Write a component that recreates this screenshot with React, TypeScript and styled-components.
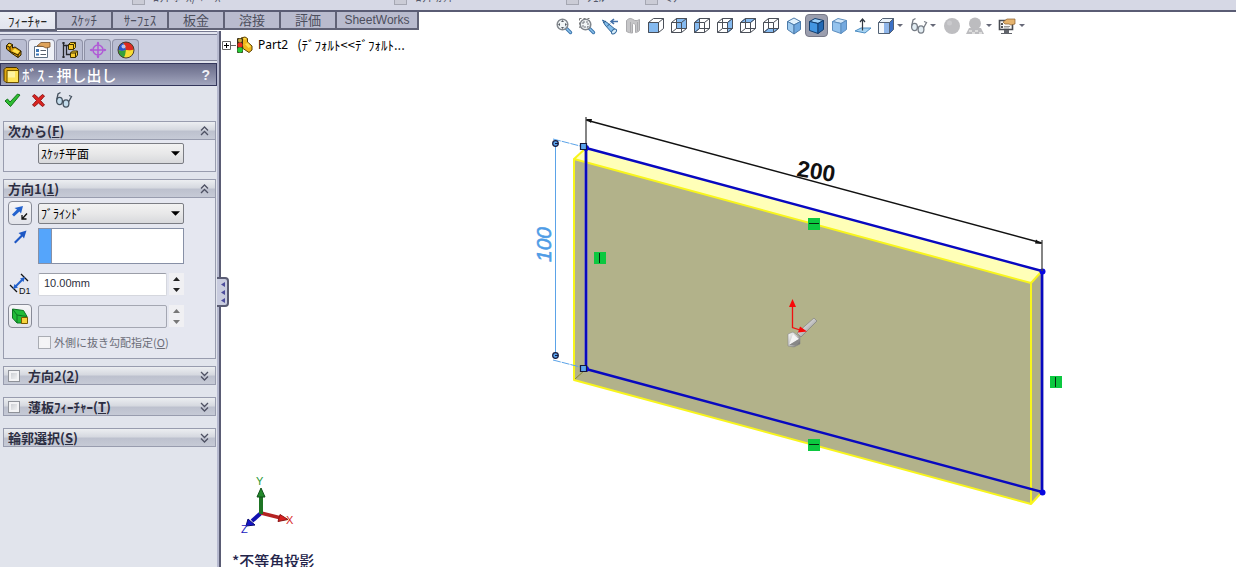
import React from "react";
import styled, { createGlobalStyle, css } from "styled-components";

const jp = `"Noto Sans CJK JP", sans-serif`;

const GlobalStyle = createGlobalStyle`
  * { box-sizing: border-box; }
  body { margin: 0; background: #fff; font-family: ${jp}; font-size: 12px; color: #1c1c28; overflow: hidden; }
  button, input, select { font: inherit; color: inherit; margin: 0; padding: 0; }
  svg { display: block; }
`;

const Page = styled.div`
  display: flex;
  flex-direction: column;
  min-height: 100vh;
`;

/* ---------- ribbon ---------- */

const Ribbon = styled.header`
  display: flex;
  align-items: flex-end;
  height: 12px;
  overflow: hidden;
  background: #d6d8e5;
  border-bottom: 2px solid #5a5c74;
`;

const RibbonItem = styled.button<{ $gap: number }>`
  display: flex;
  align-items: flex-end;
  gap: 8px;
  flex: none;
  height: 16px;
  margin-left: ${(p) => p.$gap}px;
  border: 0;
  background: none;
  color: #55586a;
  font-size: 12px;
  line-height: 16px;
  padding-bottom: 5px;
`;

const RibbonGlyph = styled.span`
  width: 13px;
  height: 8px;
  border: 1px solid #a5a7b2;
  background: #cbccd6;
`;

const TabRow = styled.div`
  display: flex;
  align-items: flex-start;
  height: 19px;
  position: relative;
  z-index: 2;
`;

const Tabs = styled.nav`
  display: flex;
  flex: none;
`;

const Tab = styled.button<{ $active?: boolean; $wide?: boolean }>`
  width: ${(p) => (p.$wide ? 82 : 56)}px;
  height: 18px;
  border: 0;
  border-right: 2px solid #606276;
  border-bottom: 2px solid #606276;
  background: #b9bbce;
  color: #4c4e5c;
  font-size: 13px;
  line-height: 16px;
  white-space: nowrap;
  ${(p) => p.$wide && css`font-family: "Liberation Sans", sans-serif; font-size: 12px;`}
  ${(p) =>
    p.$active &&
    css`
      width: 57px;
      height: 19px;
      background: linear-gradient(#eceef5, #e2e4ee);
      color: #222;
    `}
`;

const ViewBar = styled.div`
  display: flex;
  flex: none;
  margin: 2px 0 0 133px;
`;

const ViewButton = styled.button<{ $active?: boolean }>`
  display: flex;
  align-items: center;
  justify-content: center;
  width: 23px;
  height: 23px;
  border: 1px solid transparent;
  border-radius: 4px;
  background: none;
  ${(p) =>
    p.$active &&
    css`
      background: #9b9eae;
      border-color: #777988;
    `}
`;

const CaretButton = styled.button`
  display: flex;
  align-items: center;
  width: 10px;
  height: 23px;
  border: 0;
  background: none;
`;

/* ---------- property manager ---------- */

const Workspace = styled.div`
  display: flex;
  flex: 1;
`;

const Sidebar = styled.aside`
  position: relative;
  flex: none;
  width: 221px;
  background: #e1e4ec;
  border-right: 2px solid #5a5c74;
  box-shadow: inset -2px 0 #b6b9cf;
`;

const PanelTabs = styled.nav`
  display: flex;
  align-items: flex-end;
  gap: 1px;
  height: 30px;
  margin-right: 2px;
  background: #cdd0e1;
  border-top: 1px solid #777a92;
  border-bottom: 1px solid #85889c;
  box-shadow: inset 0 2px #e3e5ef, inset 0 3px #777a92;
`;

const PanelTab = styled.button<{ $active?: boolean }>`
  display: flex;
  align-items: center;
  justify-content: center;
  width: 27px;
  height: 21px;
  border: 1px solid #8e91a6;
  border-bottom: 0;
  border-radius: 4px 4px 0 0;
  background: ${(p) => (p.$active ? "#eff1f7" : "#b9bdd2")};
`;

const TitleBar = styled.div`
  display: flex;
  align-items: center;
  height: 23px;
  margin: 2px 2px 0 0;
  padding: 0 6px 0 2px;
  gap: 2px;
  border: 1px solid #34375c;
  background: linear-gradient(#686b88, #8487a2 50%, #a2a6be);
`;

const Title = styled.h1`
  flex: 1;
  margin: 0;
  color: #fff;
  font-size: 15px;
  font-weight: 500;
  line-height: 20px;
  white-space: pre;
`;

const HelpButton = styled.button`
  border: 0;
  background: none;
  color: #f0f0f6;
  font-family: "Liberation Sans", sans-serif;
  font-size: 14px;
  font-weight: 700;
  line-height: 18px;
`;

const Actions = styled.div`
  display: flex;
  gap: 8px;
  height: 35px;
  padding: 5px 0 0 3px;
`;

const PlainButton = styled.button`
  display: flex;
  align-items: center;
  justify-content: center;
  width: 18px;
  height: 18px;
  border: 0;
  background: none;
`;

const Groups = styled.div`
  display: flex;
  flex-direction: column;
  gap: 7px;
  margin: 0 3px;
`;

const Collapsed = styled.div`
  display: flex;
  flex-direction: column;
  gap: 12px;
`;

const Group = styled.section`
  border: 1px solid #989cae;
  background: #e5e7f0;
`;

const GroupHeader = styled.div<{ $open?: boolean }>`
  display: flex;
  align-items: center;
  height: 17px;
  padding: 0 5px 0 4px;
  background: linear-gradient(#eceef1, #d6d9e0 45%, #bdc1ce 55%, #c6cad6);
  ${(p) =>
    p.$open &&
    css`
      height: 18px;
      border-bottom: 1px solid #989cae;
    `}
`;

const GroupTitle = styled.span`
  flex: 1;
  color: #2c2e42;
  font-size: 13px;
  font-weight: 700;
  line-height: 16px;
  white-space: nowrap;
`;

const GroupLabel = styled(GroupTitle).attrs({ as: "label" })<{ htmlFor: string }>`
  padding-left: 8px;
`;

const FoldButton = styled.button`
  display: flex;
  width: 10px;
  border: 0;
  background: none;
`;

const Check = styled.input<{ $small?: boolean }>`
  appearance: none;
  flex: none;
  width: ${(p) => (p.$small ? 12 : 13)}px;
  height: ${(p) => (p.$small ? 12 : 13)}px;
  border: 1px solid #8f9299;
  background: linear-gradient(135deg, #c3c6cc, #fafafa);
  box-shadow: inset 0 0 0 2px #f3f3f5;
  &:disabled {
    border-color: #a9acb3;
    background: #f4f4f6;
  }
`;

const FromBody = styled.div`
  padding: 3px 0 7px 34px;
`;

const DirectionBody = styled.div`
  display: grid;
  grid-template-columns: 24px 146px;
  column-gap: 6px;
  row-gap: 3px;
  padding: 3px 4px 5px;
`;

const Cell = styled.div<{ $top?: boolean }>`
  display: flex;
  align-items: ${(p) => (p.$top ? "flex-start" : "center")};
  justify-content: center;
`;

const Field = styled.div<{ $tall?: boolean }>`
  display: flex;
  align-items: center;
  height: ${(p) => (p.$tall ? 34 : 24)}px;
  gap: 2px;
`;

const SelectWrap = styled.div`
  display: grid;
  width: 146px;
  height: 21px;
  align-items: center;
  > * { grid-area: 1 / 1; }
  > svg { justify-self: end; margin-right: 4px; pointer-events: none; }
`;

const Select = styled.select`
  appearance: none;
  width: 100%;
  height: 21px;
  padding: 0 2px;
  border: 1px solid #7b7d84;
  border-radius: 2px;
  background: linear-gradient(#f2f2f2, #e8e8e9 50%, #d8d9dc);
  color: #000;
  font-size: 12px;
`;

const SelectionBox = styled.div`
  display: flex;
  gap: 1px;
  width: 146px;
  height: 36px;
  border: 1px solid #8790a6;
  background: #fff;
`;

const SelectionMark = styled.div`
  width: 13px;
  background: #55a5fb;
  border-right: 1px solid #8790a6;
`;

const NumberInput = styled.input`
  width: 129px;
  height: 23px;
  padding: 0 5px 2px;
  border: 1px solid #d5d7de;
  border-top-color: #9b9ea8;
  border-radius: 2px;
  background: #fff;
  color: #2e3040;
  font-family: "Liberation Sans", sans-serif;
  font-size: 11px;
  &:disabled {
    border-color: #a4a7b2;
    background: #e4e6ee;
  }
`;

const Spinner = styled.div`
  display: flex;
  flex-direction: column;
  width: 15px;
  background: #f0f0f3;
`;

const SpinButton = styled.button`
  display: flex;
  align-items: center;
  justify-content: center;
  height: 11px;
  border: 0;
  background: none;
  color: #222;
  &:disabled { color: #777; }
`;

const ToolButton = styled.button`
  display: flex;
  align-items: center;
  justify-content: center;
  width: 24px;
  height: 24px;
  border: 1px solid #888b97;
  border-radius: 4px;
  background: linear-gradient(#f6f6f8, #e2e3ea);
`;

const CheckRow = styled.div`
  display: flex;
  align-items: center;
  gap: 3px;
  grid-column: 2;
  height: 22px;
  color: #6b6d78;
  font-size: 11px;
  line-height: 16px;
  white-space: nowrap;
`;

const Handle = styled.button`
  position: absolute;
  top: 246px;
  right: -10px;
  display: flex;
  align-items: center;
  justify-content: center;
  width: 12px;
  height: 30px;
  border: 2px solid #5a5c74;
  border-left: 0;
  border-radius: 0 4px 4px 0;
  background: #c9ccdf;
  z-index: 1;
`;

/* ---------- viewport ---------- */

const Viewport = styled.main`
  position: relative;
  flex: 1;
  min-width: 0;
  background: #fff;
`;

const Scene = styled.svg`
  position: absolute;
  inset: 0;
  width: 100%;
  height: 100%;
`;

const Tree = styled.div`
  position: relative;
  display: flex;
  align-items: center;
  width: max-content;
  padding: 5px 0 0 1px;
  color: #000;
  font-size: 12px;
  line-height: 18px;
  white-space: pre;
`;

const Expander = styled.button`
  display: flex;
  border: 0;
  background: none;
`;

const PartName = styled.span`
  margin-left: 5px;
  font-family: "Noto Sans", sans-serif;
  font-size: 12px;
`;

const Configuration = styled.span`
  margin-left: 9px;
  font-size: 13px;
`;

const ViewName = styled.p`
  position: absolute;
  left: 11px;
  bottom: -4px;
  margin: 0;
  color: #23234a;
  font-size: 15px;
  font-weight: 500;
  line-height: 20px;
`;

/* ---------- icons ---------- */

const Down = ({ color = "#000", w = 9 }: { color?: string; w?: number }) => (
  <svg width={w} height="5" viewBox="0 0 10 5"><path d="M0 0h10L5 5z" fill={color} /></svg>
);

const Spin = ({ up }: { up?: boolean }) => (
  <svg width="7" height="4" viewBox="0 0 7 4"><path d={up ? "M0 4h7L3.500 0z" : "M0 0h7L3.500 4z"} fill="currentColor" /></svg>
);

const Fold = ({ open }: { open?: boolean }) => (
  <svg width="9" height="10" viewBox="0 0 9 10" fill="none" stroke="#4e5163" strokeWidth="1.300">
    <path d={open ? "M1 4.500L4.500 1L8 4.500M1 9L4.500 5.500L8 9" : "M1 1L4.500 4.500L8 1M1 5.500L4.500 9L8 5.500"} />
  </svg>
);

const Glasses = ({ size = 18, muted }: { size?: number; muted?: boolean }) => (
  <svg width={size} height={size} viewBox="0 0 18 18" fill={muted ? "#e3edf3" : "#c3dcec"} stroke={muted ? "#777d86" : "#45525f"} strokeWidth="1.300">
    <ellipse cx="4.500" cy="10" rx="2.900" ry="3.600" />
    <ellipse cx="11" cy="12.500" rx="2.900" ry="3.600" />
    <path d="M7.200 10.500l1.500 .8M1.800 8.500L3 3L5.500 1.500M13.500 11L16.500 5.500L14 4.500" fill="none" />
  </svg>
);

const faces: Record<string, string> = {
  front: "M1.500 5.500h10v10h-10z",
  back: "M6.500 1.500h10v10h-10z",
  left: "M1.500 5.500l5-4v10l-5 4z",
  right: "M11.500 5.500l5-4v10l-5 4z",
  top: "M1.500 5.500l5-4h10l-5 4z",
  bottom: "M1.500 15.500l5-4h10l-5 4z",
};

const WireCube = ({ face }: { face: string }) => (
  <svg width="18" height="17" viewBox="0 0 18 17" fill="none" stroke="#4a4f58" strokeWidth="1">
    <path d={faces[face]} fill="#85baf0" stroke="#3e7ec4" />
    <path d="M1.500 5.500h10v10h-10zM1.500 5.500l5-4h10v10l-5 4M11.500 5.500l5-4" />
    {face !== "front" && <path d="M6.500 1.500v10h10M6.500 11.500l-5 4" />}
  </svg>
);

const tones = [
  ["#e1f1fc", "#9fcbf0", "#6fa8df", "#4c7baa"],
  ["#9fd2fa", "#4396e2", "#2369b4", "#123e70"],
  ["#d3e8fa", "#94c3ee", "#74a9df", "#5d8ebf"],
];

const SolidCube = ({ tone }: { tone: number }) => {
  const [top, left, right, edge] = tones[tone];
  return (
    <svg width="17" height="18" viewBox="0 0 17 18" stroke={edge} strokeWidth="1" strokeLinejoin="round">
      <path d="M1.500 4.500L7 1.500l8.500 2L10 6.500z" fill={top} />
      <path d="M1.500 4.500L10 6.500v10l-8.500-3z" fill={left} />
      <path d="M15.500 3.500L10 6.500v10l5.500-4z" fill={right} />
    </svg>
  );
};

const ViewCube = () => (
  <svg width="16" height="18" viewBox="0 0 16 18" stroke={tones[0][3]} strokeLinejoin="round">
    <path d="M8 1l6.500 3.500L8 8L1.500 4.500z" fill={tones[0][0]} />
    <path d="M1.500 4.500L8 8v9l-6.500-4.500z" fill={tones[0][1]} />
    <path d="M14.500 4.500L8 8v9l6.500-4.500z" fill={tones[0][2]} />
  </svg>
);

const Magnifier = ({ area }: { area?: boolean }) => (
  <svg width="18" height="18" viewBox="0 0 18 18" fill="none">
    {area && <path d="M1.500 1.500h10v9h-10z" stroke="#777" strokeDasharray="2 2" />}
    <path d="M11 11l4.500 4.500" stroke="#3c76ae" strokeWidth="3.400" strokeLinecap="round" />
    <path d="M11 11l4.500 4.500" stroke="#8cc1ea" strokeWidth="1.400" strokeLinecap="round" />
    <circle cx="7.500" cy="7.500" r="5.300" fill="#eef2f4" fillOpacity=".8" stroke="#82878d" strokeWidth="1.500" />
    <path d={area ? "M5 5h5v5H5z" : "M7.500 3l1.500 2h-3zM7.500 12l1.500-2h-3zM3 7.500L5 6v3zM12 7.500L10 6v3z"} fill={area ? "none" : "#545a62"} stroke={area ? "#70757c" : "none"} strokeDasharray={area ? "2 1" : undefined} />
  </svg>
);

const PreviousView = () => (
  <svg width="18" height="18" viewBox="0 0 18 18" fill="none">
    <path d="M1.500 3l4.500 2.500l9 7.500l-3.500 3.500L4 8z" fill="#83bce9" stroke="#35699c" />
    <path d="M2 6l3-2M6 9.500l3-3" stroke="#255785" />
    <ellipse cx="13" cy="14.500" rx="3" ry="1.800" transform="rotate(-45 13 14.500)" fill="#d8eefa" stroke="#35699c" />
    <path d="M17 4.500h-6M13 2l-3 2.500L13 7" stroke="#416fa8" strokeWidth="1.600" />
  </svg>
);

const Section = () => (
  <svg width="16" height="18" viewBox="0 0 16 18" fill="#c6c6c8" stroke="#aaaaad">
    <path d="M1.500 3.500C4 1 6 1 8 2.500S12 4 14.500 2.500v11c-2 2-4 2-4 2V8c-1-2-3-2-3 0v8c-2 0-4-.5-6-1.500z" />
    <path d="M5.500 5v10M12.500 5v9" />
  </svg>
);

const NormalTo = () => (
  <svg width="18" height="18" viewBox="0 0 18 18">
    <path d="M1 14l6-3h10l-6 5z" fill="#a7d4f3" stroke="#4c8cc2" />
    <path d="M8.500 13.500V2M6 5L8.500 2L11 5" fill="none" stroke="#333a44" strokeWidth="1.200" />
  </svg>
);

const DisplayStyle = () => (
  <svg width="18" height="18" viewBox="0 0 18 18" stroke="#526174">
    <path d="M1.500 5.500l4-4h11l-4 4z" fill="#e9f2fa" />
    <path d="M1.500 5.500h11v11h-11z" fill="#f4f8fc" />
    <path d="M7 6h5v10H7z" fill="#8fb6ea" stroke="none" />
    <path d="M12.500 5.500l4-4v11l-4 4z" fill="#3b70c6" />
  </svg>
);

const Ball = () => (
  <svg width="18" height="18" viewBox="0 0 18 18">
    <circle cx="9" cy="9" r="8" fill="#bebec1" />
    <circle cx="6.500" cy="6" r="2.500" fill="#cbcbce" />
  </svg>
);

const SceneIcon = () => (
  <svg width="18" height="18" viewBox="0 0 18 18" fill="#bcbcbf">
    <path d="M3 11h12l3 6H0z" />
    <path d="M3 13h3v2H3zM9 13h3v2H9zM6 15h3v2H6zM13 15h3v2h-3z" fill="#ddd" />
    <circle cx="9" cy="6.500" r="6" />
  </svg>
);

const Settings = () => (
  <svg width="19" height="18" viewBox="0 0 19 18">
    <path d="M1.500 3.500h13v9h-13z" fill="#f8f8f8" stroke="#484b52" strokeWidth="1.600" />
    <path d="M6 13h5v3H6zM3 16h11v1H3z" fill="#61646b" />
    <path d="M3 6h2v2H3zM3 9h2v2H3z" fill="#555" />
    <path d="M6 9.500h6M6 11h5" stroke="#999" />
    <path d="M5 5l4-3h8v5l-4 1l-2-1H7z" fill="#e5b36d" stroke="#8a5e2e" strokeWidth=".7" />
  </svg>
);

const PartGlyph = () => (
  <svg width="18" height="18" viewBox="0 0 18 18" stroke="#2e2200" strokeLinejoin="round">
    <path d="M1.500 4.500L4 2l3.500 1.500v3.500l2.500-1l6 4v4L13 16.500l-6-4L1.500 8z" fill="#d99a08" />
    <path d="M1.500 4.500L5 6.500v4l8 3.500l3-4M5 6.500l2.500-3M13 14v2.500" fill="none" />
    <path d="M3 4.300l1.200-1.300l2 1l-1.200 1.300zM7 10l3-2.500l4.500 3l-2 2.300z" fill="#ffe14c" stroke="none" />
  </svg>
);

const PropertyGlyph = () => (
  <svg width="18" height="18" viewBox="0 0 18 18">
    <path d="M1.500 5.500h13v11h-13z" fill="#fff" stroke="#5f7184" />
    <path d="M3 8h3v3H3zM3 12.500h3v2H3z" fill="#3c77b8" />
    <path d="M7.500 9.500H13M7.500 13.500H13" stroke="#555e6b" />
    <path d="M4 5L8 1.500h9V6l-4 1l-3-1.500z" fill="#dfa35a" stroke="#79502a" strokeWidth=".8" />
  </svg>
);

const ConfigGlyph = () => (
  <svg width="18" height="18" viewBox="0 0 18 18">
    <path d="M2.500 1v16M2.500 4.500H8M5.500 4.500v9H10" fill="none" stroke="#26262a" strokeWidth="1.300" />
    <path d="M1 2h3M1 16h3" stroke="#26262a" />
    <path d="M7.500 3.500l2-2h5v5l-2 2h-5zM9.500 12l2-2h5v4l-2 2.500h-5z" fill="#f6c92c" stroke="#3f3200" />
    <path d="M7.500 3.500h5v5M12.500 3.500l2-2M9.500 12h5v4.500M14.500 12l2-2" fill="none" stroke="#3f3200" />
  </svg>
);

const TargetGlyph = () => (
  <svg width="18" height="18" viewBox="0 0 18 18" fill="none" stroke="#b05ad6" strokeWidth="1.500">
    <circle cx="9" cy="9" r="5" />
    <path d="M9 1v16M1 9h16" />
    <path d="M7.500 3L9 .5L10.500 3zM7.500 15L9 17.500L10.500 15zM3 7.500L.5 9L3 10.500zM15 7.500L17.500 9L15 10.500z" fill="#b05ad6" stroke="none" />
  </svg>
);

const AppearanceGlyph = () => (
  <svg width="18" height="18" viewBox="0 0 18 18">
    <circle cx="9" cy="9" r="8" fill="#f2c51c" />
    <path d="M1 9a8 8 0 0 1 5-7.400Q9 5 9 9Q5 11 1 9z" fill="#2b55cc" />
    <path d="M6 1.600A8 8 0 0 1 17 8.500Q13 10 9 9Q9 5 6 1.600z" fill="#dc2b22" />
    <path d="M1 9q4 2 8 0q0 4-2 7.700A8 8 0 0 1 1 9z" fill="#35a03a" />
    <path d="M9 9q4 1 8-.5A8 8 0 0 1 7 16.700Q9 13 9 9z" fill="#f7dc34" />
    <circle cx="9" cy="9" r="8" fill="none" stroke="#4a3d34" />
    <circle cx="6.500" cy="5.500" r="2" fill="#fff" opacity=".65" />
  </svg>
);

const BossGlyph = () => (
  <svg width="17" height="18" viewBox="0 0 17 18" strokeLinejoin="round">
    <path d="M1 3.500L3 1.500h10.500l2 2v12l-2 1H3l-2-2z" fill="#e0a80e" stroke="#463300" />
    <path d="M4 4.500h11.500v12H4z" fill="#ffe45a" stroke="#6c5000" />
    <path d="M5 5.500h7v6H5z" fill="#fff3a0" />
  </svg>
);

const OkGlyph = () => (
  <svg width="17" height="16" viewBox="0 0 17 16">
    <path d="M1 9l2.500-2L6 10L13.500 2l2.500 1L6.500 14.500z" fill="#2fbd33" stroke="#14751a" />
  </svg>
);

const CancelGlyph = () => (
  <svg width="15" height="15" viewBox="0 0 15 15">
    <path d="M1.500 3L3.500 1.500L7.500 5L11.500 1.500L13.500 3L9.500 7.500L13.500 12L11.500 13.500L7.500 10L3.500 13.500L1.500 12L5.500 7.500z" fill="#dc2420" stroke="#931515" />
  </svg>
);

const ReverseGlyph = () => (
  <svg width="18" height="18" viewBox="0 0 18 18">
    <path d="M1 10.500L6 5.500L3.500 4L12 2L10 9.500L8.500 7.500L3 12.500z" fill="#2463ce" />
    <path d="M16 9.500l-4.500 5M11 11v4h4.500" fill="none" stroke="#111" strokeWidth="1.300" />
  </svg>
);

const DirectionGlyph = () => (
  <svg width="18" height="18" viewBox="0 0 18 18">
    <path d="M3 14L10 7L7.500 5L15.500 2.500L13 10.500L11.500 8.500L4.500 15.500z" fill="#1e57c4" />
  </svg>
);

const DepthGlyph = () => (
  <svg width="22" height="22" viewBox="0 0 22 22">
    <path d="M1 12l7 7M12 1l7 7" stroke="#111" strokeWidth="1.300" />
    <path d="M6 14l8-8" stroke="#2463ce" strokeWidth="2" />
    <path d="M4 16l1.500-5l3.500 3.500zM16 4l-5 1.500L14.500 9z" fill="#2463ce" />
    <text x="10" y="21" fontFamily="Liberation Sans, sans-serif" fontSize="9" fill="#111">D1</text>
  </svg>
);

const DraftGlyph = () => (
  <svg width="18" height="18" viewBox="0 0 18 18" strokeLinejoin="round">
    <path d="M1.500 2l11 1.500l3.500 6v6.500H6L1.500 11z" fill="#20bc38" stroke="#0d7423" />
    <path d="M1.500 2L6 8l10 1.500M6 8v8" fill="none" stroke="#0d7423" />
    <path d="M10.500 10.500h6v6h-6z" fill="#f6d33c" stroke="#7a5b00" />
  </svg>
);

const TreeExpander = () => (
  <svg width="14" height="11" viewBox="0 0 14 11" fill="none" stroke="#666">
    <path d="M.5 1.500h8v8h-8zM9 5.500h5" />
    <path d="M2 5.500h5M4.500 3v5" stroke="#000" />
  </svg>
);

const TreePart = () => (
  <svg width="17" height="18" viewBox="0 0 17 18">
    <path d="M5 2l4-1l2.500 1.500v3.500l4.500 4v4l-3 2.500l-6-4z" fill="#f0b71c" stroke="#5c4100" />
    <path d="M9 8l3-1l3 3.500l-2.500 1.500zM7 2.500l2-.8l1.500 1l-1.500 1z" fill="#ffe04e" />
    <rect x="1" y="2" width="6" height="15" rx="1" fill="#3a3018" />
    <circle cx="4" cy="4.500" r="2" fill="#c6a63c" />
    <circle cx="4" cy="9" r="2.500" fill="#ee2e20" />
    <circle cx="4" cy="14" r="2.700" fill="#28cc3c" />
  </svg>
);

/* ---------- drawing ---------- */

const Relation = ({ x, y, vertical }: { x: number; y: number; vertical?: boolean }) => (
  <g>
    <rect x={x - 6} y={y - 6} width="12" height="12" fill="#0cc840" />
    <path d={vertical ? `M${x - 0.5} ${y - 5}v10` : `M${x - 5} ${y - 0.5}h10`} stroke="#06280e" />
  </g>
);

const Model = () => (
  <Scene viewBox="221 31 1015 536" preserveAspectRatio="xMinYMin meet">
    <defs>
      <linearGradient id="steel" x1="0" x2="1" y1="0" y2="1">
        <stop offset="0" stopColor="#fff" />
        <stop offset=".5" stopColor="#c4c4c4" />
        <stop offset="1" stopColor="#555" />
      </linearGradient>
    </defs>
    <path d="M574 159L1031 283V504L574 380z" fill="#b2b28a" />
    <path d="M1031 283L1042 271V492L1031 504z" fill="#afae87" />
    <path d="M574 159L586 148L1042 271L1031 283z" fill="#ffffb8" />
    <path d="M574 380L586 369" stroke="#85852f" />
    <path d="M586 148L574 159L1031 283L1042 271M574 159V380L1031 504V283M1031 504L1042 492" fill="none" stroke="#f8f51c" strokeWidth="2" strokeLinejoin="round" />
    <path d="M586 148V369M1042 271V492" stroke="#8988cc" strokeWidth="3" />
    <path d="M586 148L1042 271V492L586 369z" fill="none" stroke="#0808c0" strokeWidth="2.400" />
    <g fill="#0808e0">
      <circle cx="1042.500" cy="271.500" r="3" />
      <circle cx="1042.500" cy="492.500" r="3" />
      <circle cx="586" cy="148" r="3" />
      <circle cx="586" cy="369" r="3" />
    </g>
    <g stroke="#111" strokeWidth="1.300" fill="#111">
      <path d="M586 120L1042 243" />
      <path d="M586 117V148M1042 240V271" stroke="#444" />
      <path d="M586 119l6 0l-1 4zM1042 244l-6-4.500l-1 4z" stroke="none" />
    </g>
    <text x="796" y="176" transform="rotate(9 796 176)" fontFamily="Liberation Sans, sans-serif" fontWeight="700" fontSize="23" fill="#111">200</text>
    <g stroke="#5ba3e8" fill="none">
      <path d="M555.500 143V356" />
      <path d="M553 139L584 147M553 360L584 368" strokeDasharray="8 1" />
    </g>
    <text x="551" y="262" transform="rotate(-90 551 262)" fontFamily="Liberation Sans, sans-serif" fontStyle="italic" fontSize="21" fill="#4f9ce6" stroke="#4f9ce6" strokeWidth=".6">100</text>
    <g fill="#5aa4ee" stroke="#14183c" strokeWidth="1.200">
      <circle cx="555.500" cy="143.500" r="2.800" />
      <circle cx="555.500" cy="355.500" r="2.800" />
      <path d="M555 143.500h3M555 355.500h3" />
      <path d="M580.500 143.500h6v6h-6zM580.500 365.500h6v6h-6z" />
    </g>
    <Relation x={814} y={224} />
    <Relation x={600} y={258} vertical />
    <Relation x={814} y={445} />
    <Relation x={1056} y={382} vertical />
    <g>
      <path d="M814 318l3 3L801 337l-4-4z" fill="url(#steel)" stroke="#777" strokeWidth=".6" />
      <path d="M788 334l5-2l7 5v7l-6 3l-6-1z" fill="url(#steel)" stroke="#888" strokeWidth=".6" />
      <path d="M789 345L793 334L799 339z" fill="#f4f4f4" />
      <path d="M789 345L799 339L797 345z" fill="#888" />
      <path d="M792.500 306V327.500L800 330" fill="none" stroke="#f01010" strokeWidth="1.300" />
      <path d="M792.500 299l3.500 8h-7zM807 331.500l-9 1l2-6z" fill="#f80808" />
    </g>
    <g>
      <path d="M261 513L252 521" stroke="#1212b0" strokeWidth="4" />
      <path d="M246 526l2-7l7 6z" fill="#1515c8" stroke="#0a0a70" />
      <path d="M261 513L281 518" stroke="#b42222" strokeWidth="3.500" />
      <path d="M288 519.500l-10 2l2-7z" fill="#d82020" stroke="#8b1515" />
      <path d="M261 514V496" stroke="#1e7424" strokeWidth="4" />
      <path d="M261 488l4 9h-8z" fill="#238a2a" stroke="#10501a" />
    </g>
    <g fontFamily="Liberation Sans, sans-serif" fontSize="11">
      <text x="256" y="485" fill="#2a9a35">Y</text>
      <text x="286" y="524" fill="#d82828">X</text>
      <text x="241" y="533" fill="#2222c0">Z</text>
    </g>
  </Scene>
);

/* ---------- page ---------- */

const tabNames = ["ｽｹｯﾁ", "ｻｰﾌｪｽ", "板金", "溶接", "評価"];

const App = () => (
  <>
    <GlobalStyle />
    <Page>
      <Ribbon>
        <RibbonItem $gap={132}><RibbonGlyph />ﾛﾌﾄ ﾎﾞｽ/ﾍﾞｰｽ</RibbonItem>
        <RibbonItem $gap={174}><RibbonGlyph />ﾛﾌﾄ ｶｯﾄ</RibbonItem>
        <RibbonItem $gap={112}><RibbonGlyph />ｼｪﾙ</RibbonItem>
        <RibbonItem $gap={40}><RibbonGlyph />ﾐﾗｰ</RibbonItem>
      </Ribbon>
      <TabRow>
        <Tabs>
          <Tab $active>ﾌｨｰﾁｬｰ</Tab>
          {tabNames.map((name) => <Tab key={name}>{name}</Tab>)}
          <Tab $wide>SheetWorks</Tab>
        </Tabs>
        <ViewBar>
          <ViewButton aria-label="Zoom to fit"><Magnifier /></ViewButton>
          <ViewButton aria-label="Zoom to area"><Magnifier area /></ViewButton>
          <ViewButton aria-label="Previous view"><PreviousView /></ViewButton>
          <ViewButton aria-label="Section view"><Section /></ViewButton>
          {Object.keys(faces).map((face) => (
            <ViewButton key={face} aria-label={face}><WireCube face={face} /></ViewButton>
          ))}
          <ViewButton aria-label="Isometric"><ViewCube /></ViewButton>
          <ViewButton aria-label="Trimetric" $active><SolidCube tone={1} /></ViewButton>
          <ViewButton aria-label="Dimetric"><SolidCube tone={2} /></ViewButton>
          <ViewButton aria-label="Normal to"><NormalTo /></ViewButton>
          <ViewButton aria-label="Display style"><DisplayStyle /></ViewButton>
          <CaretButton aria-label="Display style menu"><Down color="#666978" w={6} /></CaretButton>
          <ViewButton aria-label="Hide or show"><Glasses muted /></ViewButton>
          <CaretButton aria-label="Hide or show menu"><Down color="#666978" w={6} /></CaretButton>
          <ViewButton aria-label="Appearance"><Ball /></ViewButton>
          <ViewButton aria-label="Scene"><SceneIcon /></ViewButton>
          <CaretButton aria-label="Scene menu"><Down color="#666978" w={6} /></CaretButton>
          <ViewButton aria-label="View settings"><Settings /></ViewButton>
          <CaretButton aria-label="View settings menu"><Down color="#666978" w={6} /></CaretButton>
        </ViewBar>
      </TabRow>
      <Workspace>
        <Sidebar>
          <PanelTabs>
            <PanelTab aria-label="Feature tree"><PartGlyph /></PanelTab>
            <PanelTab aria-label="Properties" $active><PropertyGlyph /></PanelTab>
            <PanelTab aria-label="Configurations"><ConfigGlyph /></PanelTab>
            <PanelTab aria-label="Dimensions"><TargetGlyph /></PanelTab>
            <PanelTab aria-label="Appearances"><AppearanceGlyph /></PanelTab>
          </PanelTabs>
          <TitleBar>
            <BossGlyph />
            <Title>ﾎﾞｽ - 押し出し</Title>
            <HelpButton>?</HelpButton>
          </TitleBar>
          <Actions>
            <PlainButton aria-label="OK"><OkGlyph /></PlainButton>
            <PlainButton aria-label="Cancel"><CancelGlyph /></PlainButton>
            <PlainButton aria-label="Preview"><Glasses /></PlainButton>
          </Actions>
          <Groups>
            <Group>
              <GroupHeader $open>
                <GroupTitle>次から(<u>F</u>)</GroupTitle>
                <FoldButton aria-label="Collapse"><Fold open /></FoldButton>
              </GroupHeader>
              <FromBody>
                <SelectWrap>
                  <Select aria-label="From"><option>ｽｹｯﾁ平面</option></Select>
                  <Down />
                </SelectWrap>
              </FromBody>
            </Group>
            <Group>
              <GroupHeader $open>
                <GroupTitle>方向1(<u>1</u>)</GroupTitle>
                <FoldButton aria-label="Collapse"><Fold open /></FoldButton>
              </GroupHeader>
              <DirectionBody>
                <ToolButton aria-label="Reverse direction"><ReverseGlyph /></ToolButton>
                <Field>
                  <SelectWrap>
                    <Select aria-label="End condition"><option>ﾌﾞﾗｲﾝﾄﾞ</option></Select>
                    <Down />
                  </SelectWrap>
                </Field>
                <Cell $top><DirectionGlyph /></Cell>
                <SelectionBox><SelectionMark /></SelectionBox>
                <Cell><DepthGlyph /></Cell>
                <Field $tall>
                  <NumberInput aria-label="Depth" defaultValue="10.00mm" />
                  <Spinner>
                    <SpinButton aria-label="Increase depth"><Spin up /></SpinButton>
                    <SpinButton aria-label="Decrease depth"><Spin /></SpinButton>
                  </Spinner>
                </Field>
                <ToolButton aria-label="Draft"><DraftGlyph /></ToolButton>
                <Field>
                  <NumberInput aria-label="Draft angle" disabled />
                  <Spinner>
                    <SpinButton aria-label="Increase angle" disabled><Spin up /></SpinButton>
                    <SpinButton aria-label="Decrease angle" disabled><Spin /></SpinButton>
                  </Spinner>
                </Field>
                <CheckRow>
                  <Check type="checkbox" id="outward" disabled />
                  <label htmlFor="outward">外側に抜き勾配指定(<u>O</u>)</label>
                </CheckRow>
              </DirectionBody>
            </Group>
            <Collapsed>
              <Group>
                <GroupHeader>
                  <Check type="checkbox" id="direction2" $small />
                  <GroupLabel htmlFor="direction2">方向2(<u>2</u>)</GroupLabel>
                  <FoldButton aria-label="Expand"><Fold /></FoldButton>
                </GroupHeader>
              </Group>
              <Group>
                <GroupHeader>
                  <Check type="checkbox" id="thin" $small />
                  <GroupLabel htmlFor="thin">薄板ﾌｨｰﾁｬｰ(<u>T</u>)</GroupLabel>
                  <FoldButton aria-label="Expand"><Fold /></FoldButton>
                </GroupHeader>
              </Group>
              <Group>
                <GroupHeader>
                  <GroupTitle>輪郭選択(<u>S</u>)</GroupTitle>
                  <FoldButton aria-label="Expand"><Fold /></FoldButton>
                </GroupHeader>
              </Group>
            </Collapsed>
          </Groups>
          <Handle aria-label="Hide panel">
            <svg width="5" height="21" viewBox="0 0 5 21"><path d="M5 0v5L1 2.500zM5 8v5L1 10.500zM5 16v5L1 18.500z" fill="#4c4c9c" /></svg>
          </Handle>
        </Sidebar>
        <Viewport>
          <Model />
          <Tree>
            <Expander aria-label="Expand part"><TreeExpander /></Expander>
            <TreePart />
            <PartName>Part2</PartName>
            <Configuration>(ﾃﾞﾌｫﾙﾄ&lt;&lt;ﾃﾞﾌｫﾙﾄ...</Configuration>
          </Tree>
          <ViewName>*不等角投影</ViewName>
        </Viewport>
      </Workspace>
    </Page>
  </>
);

export default App;
